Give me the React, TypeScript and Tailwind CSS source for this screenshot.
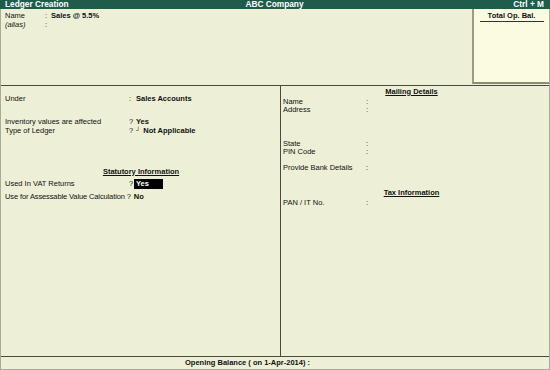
import React from "react";

const Row = ({ label, sep, value, bold = true, className = "" }: { label: string; sep: string; value?: React.ReactNode; bold?: boolean; className?: string }) => (
  <div className={`flex h-[9px] items-center leading-none ${className}`}>
    <span className="w-[124px] shrink-0 whitespace-nowrap">{label}</span>
    <span className="w-[7px] shrink-0">{sep}</span>
    <span className={bold ? "font-bold" : ""}>{value}</span>
  </div>
);

export default function App() {
  return (
    <div
      className="w-[550px] h-[370px] flex flex-col bg-[#edf0d6] text-[#111] text-[7.5px] overflow-hidden"
      style={{ fontFamily: '"Liberation Sans", Arial, sans-serif' }}
    >
      {/* Header */}
      <div className="h-[9px] shrink-0 bg-[#1f5c4c] text-white font-bold text-[8.3px] leading-none flex items-center px-[5px]">
        <span className="flex-1">Ledger Creation</span>
        <span className="flex-1 text-center">ABC Company</span>
        <span className="flex-1 text-right pr-[1px]">Ctrl + M</span>
      </div>

      <div className="flex-1 flex flex-col border-l border-r border-b border-[#a9ab9b]">
        {/* Top section */}
        <div className="h-[77px] shrink-0 flex border-b border-[#4a4a44]">
          <div className="flex-1 pt-[2px] pl-[4px]">
            <div className="flex h-[9px] items-center leading-none">
              <span className="w-[40px]">Name</span>
              <span className="w-[6px]">:</span>
              <span className="font-bold">Sales @ 5.5%</span>
            </div>
            <div className="flex h-[9px] items-center leading-none italic">
              <span className="w-[40px]">(alias)</span>
              <span className="not-italic">:</span>
            </div>
          </div>
          <div className="w-[77px] mb-[1px] bg-[#fbfbe1] border-l-2 border-b-2 border-l-[#9a9a86] border-b-[#8c8c78] flex flex-col items-center pt-[3px]">
            <div className="font-bold text-[7.5px] leading-none w-[64px] text-center border-b border-[#333] pb-[1px]">
              Total Op. Bal.
            </div>
          </div>
        </div>

        {/* Middle */}
        <div className="flex-1 flex">
          <div className="w-[280px] shrink-0 border-r border-[#4a4a44] pl-[4px] pt-[8px]">
            <Row label="Under" sep=":" value="Sales Accounts" />
            <div className="mt-[14px]">
              <Row label="Inventory values are affected" sep="?" value="Yes" />
              <Row
                label="Type of Ledger"
                sep="?"
                value={
                  <span className="flex items-center">
                    <span className="font-normal text-[6px] mr-[3px] -translate-y-[1px]">┘</span>
                    <span>Not Applicable</span>
                  </span>
                }
              />
            </div>
            <div className="mt-[32px] w-[272px] flex justify-center h-[9px] items-center leading-none">
              <span className="font-bold underline underline-offset-[1px]">Statutory Information</span>
            </div>
            <div className="mt-[3px] flex h-[10px] items-center leading-none">
              <span className="w-[124px] shrink-0">Used In VAT Returns</span>
              <span className="w-[5px] shrink-0">?</span>
              <span className="w-[29px] h-[10px] bg-black text-white font-bold flex items-center pl-[2px]">Yes</span>
            </div>
            <div className="mt-[3px] flex h-[9px] items-center leading-none whitespace-nowrap">
              <span className="shrink-0 tracking-[-0.12px]">Use for Assessable Value Calculation</span>
              <span className="ml-[2px] w-[7px] shrink-0">?</span>
              <span className="font-bold">No</span>
            </div>
          </div>

          <div className="flex-1 pl-[2px] pt-[1px]">
            <div className="flex justify-center pr-[9px] h-[9px] items-center leading-none">
              <span className="font-bold underline underline-offset-[1px]">Mailing Details</span>
            </div>
            <div className="mt-[2px]">
              <div className="flex h-[8px] items-center leading-none"><span className="w-[83px]">Name</span><span>:</span></div>
              <div className="flex h-[8px] items-center leading-none"><span className="w-[83px]">Address</span><span>:</span></div>
            </div>
            <div className="mt-[26px]">
              <div className="flex h-[8px] items-center leading-none"><span className="w-[83px]">State</span><span>:</span></div>
              <div className="flex h-[8px] items-center leading-none"><span className="w-[83px]">PIN Code</span><span>:</span></div>
            </div>
            <div className="mt-[8px] flex h-[8px] items-center leading-none"><span className="w-[83px]">Provide Bank Details</span><span>:</span></div>
            <div className="mt-[16px] flex justify-center pr-[9px] h-[9px] items-center leading-none">
              <span className="font-bold underline underline-offset-[1px]">Tax Information</span>
            </div>
            <div className="mt-[2px] flex h-[8px] items-center leading-none"><span className="w-[83px]">PAN / IT No.</span><span>:</span></div>
          </div>
        </div>

        {/* Footer */}
        <div className="h-[13px] shrink-0 border-t border-[#4a4a44] flex items-center pl-[184px] leading-none font-bold">
          Opening Balance ( on 1-Apr-2014) :
        </div>
      </div>
    </div>
  );
}
